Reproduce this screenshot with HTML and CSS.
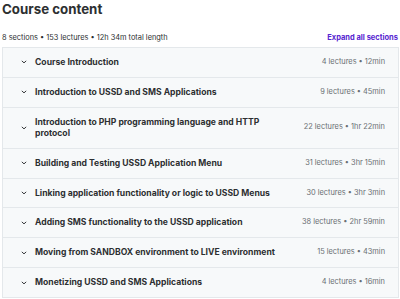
FILE: index.html
```html
<!DOCTYPE html>
<html>
<head>
<meta charset="utf-8">
<link rel="stylesheet" href="styles.css">
</head>
<body>
<div class="page">
  <h2 class="title">Course content</h2>
  <div class="meta">
    <span class="stats">8 sections • 153 lectures • 12h 34m total length</span>
    <span class="expand">Expand all sections</span>
  </div>
  <div class="sections">
    <div class="row"><span class="chev"><svg viewBox="0 0 10 10" width="8" height="8"><path d="M2.6 3.9 L5 6.1 L7.4 3.9" fill="none" stroke="#2d2f31" stroke-width="1.2" stroke-linecap="round" stroke-linejoin="round"/></svg></span><span class="name">Course Introduction</span><span class="info">4 lectures • 12min</span></div>
    <div class="row"><span class="chev"><svg viewBox="0 0 10 10" width="8" height="8"><path d="M2.6 3.9 L5 6.1 L7.4 3.9" fill="none" stroke="#2d2f31" stroke-width="1.2" stroke-linecap="round" stroke-linejoin="round"/></svg></span><span class="name">Introduction to USSD and SMS Applications</span><span class="info">9 lectures • 45min</span></div>
    <div class="row"><span class="chev"><svg viewBox="0 0 10 10" width="8" height="8"><path d="M2.6 3.9 L5 6.1 L7.4 3.9" fill="none" stroke="#2d2f31" stroke-width="1.2" stroke-linecap="round" stroke-linejoin="round"/></svg></span><span class="name">Introduction to PHP programming language and HTTP protocol</span><span class="info">22 lectures • 1hr 22min</span></div>
    <div class="row"><span class="chev"><svg viewBox="0 0 10 10" width="8" height="8"><path d="M2.6 3.9 L5 6.1 L7.4 3.9" fill="none" stroke="#2d2f31" stroke-width="1.2" stroke-linecap="round" stroke-linejoin="round"/></svg></span><span class="name">Building and Testing USSD Application Menu</span><span class="info">31 lectures • 3hr 15min</span></div>
    <div class="row"><span class="chev"><svg viewBox="0 0 10 10" width="8" height="8"><path d="M2.6 3.9 L5 6.1 L7.4 3.9" fill="none" stroke="#2d2f31" stroke-width="1.2" stroke-linecap="round" stroke-linejoin="round"/></svg></span><span class="name">Linking application functionality or logic to USSD Menus</span><span class="info">30 lectures • 3hr 3min</span></div>
    <div class="row"><span class="chev"><svg viewBox="0 0 10 10" width="8" height="8"><path d="M2.6 3.9 L5 6.1 L7.4 3.9" fill="none" stroke="#2d2f31" stroke-width="1.2" stroke-linecap="round" stroke-linejoin="round"/></svg></span><span class="name">Adding SMS functionality to the USSD application</span><span class="info">38 lectures • 2hr 59min</span></div>
    <div class="row"><span class="chev"><svg viewBox="0 0 10 10" width="8" height="8"><path d="M2.6 3.9 L5 6.1 L7.4 3.9" fill="none" stroke="#2d2f31" stroke-width="1.2" stroke-linecap="round" stroke-linejoin="round"/></svg></span><span class="name">Moving from SANDBOX environment to LIVE environment</span><span class="info">15 lectures • 43min</span></div>
    <div class="row"><span class="chev"><svg viewBox="0 0 10 10" width="8" height="8"><path d="M2.6 3.9 L5 6.1 L7.4 3.9" fill="none" stroke="#2d2f31" stroke-width="1.2" stroke-linecap="round" stroke-linejoin="round"/></svg></span><span class="name">Monetizing USSD and SMS Applications</span><span class="info">4 lectures • 16min</span></div>
  </div>
</div>
</body>
</html>
```
FILE: styles.css
```css
html, body {
  margin: 0;
  padding: 0;
  background: #ffffff;
}
body {
  font-family: Inter, "Liberation Sans", sans-serif;
  color: #2d2f31;
}
.page {
  padding: 0 1px 0 2px;
}
.title {
  margin: 0;
  font-size: 13.3px;
  line-height: 18px;
  font-weight: 700;
}
.meta {
  display: flex;
  justify-content: space-between;
  align-items: center;
  margin-top: 12px;
  height: 14px;
  font-size: 7.4px;
  padding-right: 1px;
}
.stats {
  color: #2d2f31;
}
.expand {
  color: #5624d0;
  font-weight: 700;
  font-size: 7.5px;
}
.sections {
  margin-top: 3px;
  border: 1px solid #e4e8eb;
}
.row {
  display: flex;
  align-items: center;
  background: #f7f9fa;
  padding: 9px 13px 9px 17px;
  border-top: 1px solid #e4e8eb;
}
.row:first-child {
  border-top: none;
}
.chev {
  display: flex;
  width: 15px;
  flex: none;
}
.name {
  flex: 1;
  font-size: 8.6px;
  font-weight: 700;
  line-height: 10.9px;
  padding-right: 20px;
}
.info {
  flex: none;
  font-size: 7.4px;
  color: #6a6f73;
  line-height: 10.9px;
}
```
